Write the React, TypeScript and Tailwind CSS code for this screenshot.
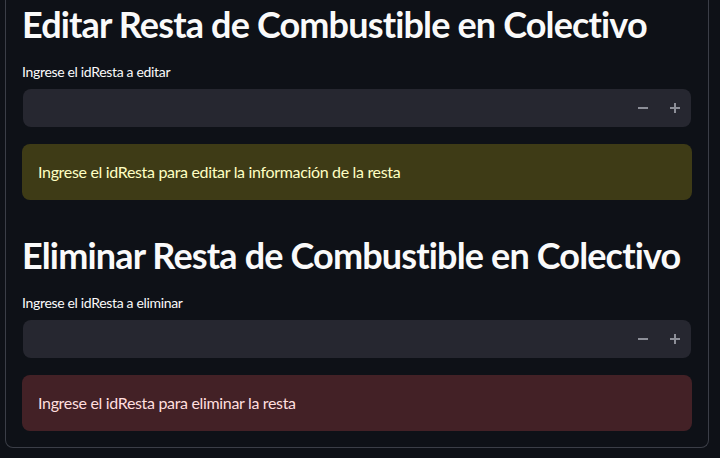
import React from "react";

const font = { fontFamily: '"Source Sans Pro", Lato, "Noto Sans", sans-serif' };

function Stepper() {
  return (
    <div className="flex items-center h-full">
      <div className="w-[32px] h-full flex items-center justify-center">
        <svg width="10" height="10" viewBox="0 0 10 10">
          <rect x="0" y="4" width="10" height="2" fill="#8d8f98" />
        </svg>
      </div>
      <div className="w-[32px] h-full flex items-center justify-center">
        <svg width="10" height="10" viewBox="0 0 10 10">
          <rect x="0" y="4" width="10" height="2" fill="#8d8f98" />
          <rect x="4" y="0" width="2" height="10" fill="#8d8f98" />
        </svg>
      </div>
    </div>
  );
}

function Section({
  title,
  label,
  message,
  kind,
}: {
  title: string;
  label: string;
  message: string;
  kind: "warning" | "error";
}) {
  const alert =
    kind === "warning"
      ? "bg-[#3e3b16] text-[#ffffc2]"
      : "bg-[#432126] text-[#ffdede]";
  return (
    <div className="flex flex-col">
      <h2 className="pt-[2px] text-[36px] leading-[44px] font-bold text-[#fafafa] tracking-[-0.85px] whitespace-nowrap">
        {title}
      </h2>
      <div className="mt-[15px] h-[22px] text-[14px] leading-[22px] text-[#fafafa] tracking-[-0.33px]">{label}</div>
      <div className="mt-[6px] ml-px w-[668px] h-[38px] rounded-[8px] bg-[#262730] flex justify-end">
        <Stepper />
      </div>
      <div
        className={`mt-[17px] h-[56px] rounded-[8px] px-[16px] flex items-center text-[16px] tracking-[-0.33px] ${alert}`}
      >
        {message}
      </div>
    </div>
  );
}

export default function App() {
  return (
    <div className="w-[720px] h-[458px] bg-[#0e1117] overflow-hidden" style={font}>
      <div className="ml-[5px] w-[704px] h-[448px] border-x border-b border-[#3b3e47] rounded-b-[8px] px-[16px] pt-0 flex flex-col">
        <div>
          <Section
            title="Editar Resta de Combustible en Colectivo"
            label="Ingrese el idResta a editar"
            message="Ingrese el idResta para editar la información de la resta"
            kind="warning"
          />
        </div>
        <div className="mt-[31px]">
          <Section
            title="Eliminar Resta de Combustible en Colectivo"
            label="Ingrese el idResta a eliminar"
            message="Ingrese el idResta para eliminar la resta"
            kind="error"
          />
        </div>
      </div>
    </div>
  );
}
